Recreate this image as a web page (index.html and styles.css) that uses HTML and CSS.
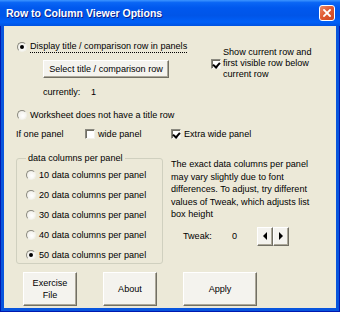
FILE: index.html
```html
<!DOCTYPE html>
<html>
<head>
<meta charset="utf-8">
<title>Row to Column Viewer Options</title>
<link rel="stylesheet" href="styles.css">
</head>
<body>
<div class="window">
  <div class="titlebar">
    <span class="title">Row to Column Viewer Options</span>
    <span class="close"><svg width="8" height="8" viewBox="0 0 8 8"><path d="M1 1L7 7M7 1L1 7" stroke="#fff" stroke-width="1.8" stroke-linecap="square"/></svg></span>
  </div>
  <div class="client">
    <div class="top">
      <div class="top-left">
        <div class="opt first"><span class="radio on"></span><span class="focus">Display title / comparison row in panels</span></div>
        <div class="btn select-btn">Select title / comparison row</div>
        <div class="currently"><span class="cur-lbl">currently:</span><span>1</span></div>
      </div>
      <div class="top-right">
        <span class="check on"></span>
        <span class="check-text">Show current row and<br>first visible row below<br>current row</span>
      </div>
    </div>
    <div class="opt ws"><span class="radio"></span>Worksheet does not have a title row</div>
    <div class="panel-row">
      <span class="one-lbl">If one panel</span>
      <span class="copt wide"><span class="check"></span>wide panel</span>
      <span class="copt"><span class="check on"></span>Extra wide panel</span>
    </div>
    <div class="middle">
      <fieldset class="group">
        <legend>data columns per panel</legend>
        <div class="opt grp"><span class="radio"></span>10 data columns per panel</div>
        <div class="opt grp"><span class="radio"></span>20 data columns per panel</div>
        <div class="opt grp"><span class="radio"></span>30 data columns per panel</div>
        <div class="opt grp"><span class="radio"></span>40 data columns per panel</div>
        <div class="opt grp"><span class="radio on"></span>50 data columns per panel</div>
      </fieldset>
      <div class="desc">
        <p>The exact data columns per panel<br>may vary slightly due to font<br>differences. To adjust, try different<br>values of Tweak, which adjusts list<br>box height</p>
        <div class="tweak">
          <span class="tweak-lbl">Tweak:</span>
          <span class="tweak-val">0</span>
          <span class="spin">
            <span class="btn sb"><svg width="4" height="8" viewBox="0 0 4 8"><path d="M4 0V8L0 4Z" fill="#000"/></svg></span>
            <span class="btn sb"><svg width="4" height="8" viewBox="0 0 4 8"><path d="M0 0V8L4 4Z" fill="#000"/></svg></span>
          </span>
        </div>
      </div>
    </div>
    <div class="buttons">
      <div class="btn big">Exercise<br>File</div>
      <div class="btn big">About</div>
      <div class="btn big apply">Apply</div>
    </div>
  </div>
</div>
</body>
</html>
```

FILE: styles.css
```css
* { box-sizing: border-box; }
html, body { margin: 0; padding: 0; }
body {
  width: 340px;
  height: 312px;
  overflow: hidden;
  font-family: "Liberation Sans", Arial, sans-serif;
  font-size: 9.1px;
  line-height: 12px;
  color: #000;
  background: #fff;
}
.window {
  width: 340px;
  height: 312px;
  display: flex;
  flex-direction: column;
  background: #0855dd;
  box-shadow: inset 1px 0 #0019b0, inset -1px 0 #0019b0, inset 0 -1px #0019b0;
}
.titlebar {
  height: 26px;
  flex: none;
  display: flex;
  align-items: center;
  justify-content: space-between;
  padding: 0 5px 0 6px;
  background: linear-gradient(to bottom, #3d95ff 0%, #0a66f5 10%, #0058ee 30%, #0055e8 60%, #0060f8 85%, #0052e0 100%);
}
.title {
  color: #fff;
  font-weight: bold;
  font-size: 10.5px;
  letter-spacing: 0;
  text-shadow: 1px 1px #0a1f8a;
}
.close {
  width: 16px;
  height: 16px;
  border: 1px solid #fff;
  border-radius: 3px;
  background: linear-gradient(135deg, #ea8a6a 0%, #e05a33 45%, #cc4520 100%);
  display: flex;
  align-items: center;
  justify-content: center;
}
.client {
  flex: 1;
  margin: 0 4px 4px;
  background: #ece9d8;
  padding: 15px 0 0 12px;
}
.top { display: flex; align-items: flex-start; }
.top-left { width: 195px; }
.opt { display: flex; align-items: center; height: 12px; white-space: nowrap; }
.radio {
  flex: none;
  width: 10px;
  height: 10px;
  border-radius: 50%;
  margin-right: 3px;
  border: 1px solid;
  border-color: #8a897f #f2f1ea #f2f1ea #8a897f;
  background: radial-gradient(circle at 60% 60%, #ffffff 0%, #f4f3ee 60%, #dcdad0 100%);
  position: relative;
}
.radio.on::after {
  content: "";
  position: absolute;
  left: 2px;
  top: 2px;
  width: 4px;
  height: 4px;
  border-radius: 50%;
  background: #000;
}
.opt.first { margin-left: 1px; }
.focus { border-bottom: 1px dotted #000; line-height: 11px; }
.btn {
  background: #f4f3ee;
  border: 1px solid;
  border-color: #ffffff #716f64 #716f64 #ffffff;
  box-shadow: inset -1px -1px #aca899;
  display: flex;
  align-items: center;
  justify-content: center;
  text-align: center;
}
.select-btn { margin: 7px 0 0 27px; width: 126px; height: 18px; }
.currently { margin: 8px 0 0 27px; display: flex; }
.cur-lbl { width: 48px; }
.top-right { display: flex; align-items: center; margin-top: 6px; }
.check {
  flex: none;
  width: 10px;
  height: 10px;
  margin-right: 2px;
  background: #fff;
  border: 1px solid;
  border-color: #8a897f #f2f1ea #f2f1ea #8a897f;
  box-shadow: inset 1px 1px #716f64;
  position: relative;
}
.check.on::after {
  content: "";
  position: absolute;
  left: 2px;
  top: 1px;
  width: 3px;
  height: 5px;
  border: solid #000;
  border-width: 0 2px 2px 0;
  transform: rotate(40deg);
}
.check-text { line-height: 11px; white-space: nowrap; }
.ws { margin: 11px 0 0 1px; }
.panel-row { margin-top: 7px; display: flex; align-items: center; height: 12px; white-space: nowrap; }
.one-lbl { width: 69px; }
.copt { display: flex; align-items: center; }
.copt .check { margin-right: 3px; }
.wide { width: 86px; }
.middle { margin-top: 12px; display: flex; align-items: flex-start; }
.group {
  margin: 0;
  padding: 0 0 2px 0;
  width: 147px;
  min-width: 0;
  border: 1px solid #d0d0bf;
  border-radius: 3px;
}
.group legend {
  margin-left: 9px;
  padding: 0 2px;
  line-height: 12px;
}
.grp { margin: 8px 0 0 9px; }
.grp:first-of-type { margin-top: 5px; }
.desc { margin-left: 8px; padding-top: 6px; }
.desc p { margin: 0; line-height: 12.5px; white-space: nowrap; }
.tweak { margin: 6px 0 0 12px; display: flex; align-items: center; height: 19px; }
.tweak-lbl { width: 49px; }
.tweak-val { width: 25px; }
.spin { display: flex; }
.sb { width: 16px; height: 19px; }
.buttons { margin-top: 8px; padding-left: 7px; display: flex; gap: 26px; }
.big { width: 54px; height: 34px; }
.apply { width: 74px; }
```
